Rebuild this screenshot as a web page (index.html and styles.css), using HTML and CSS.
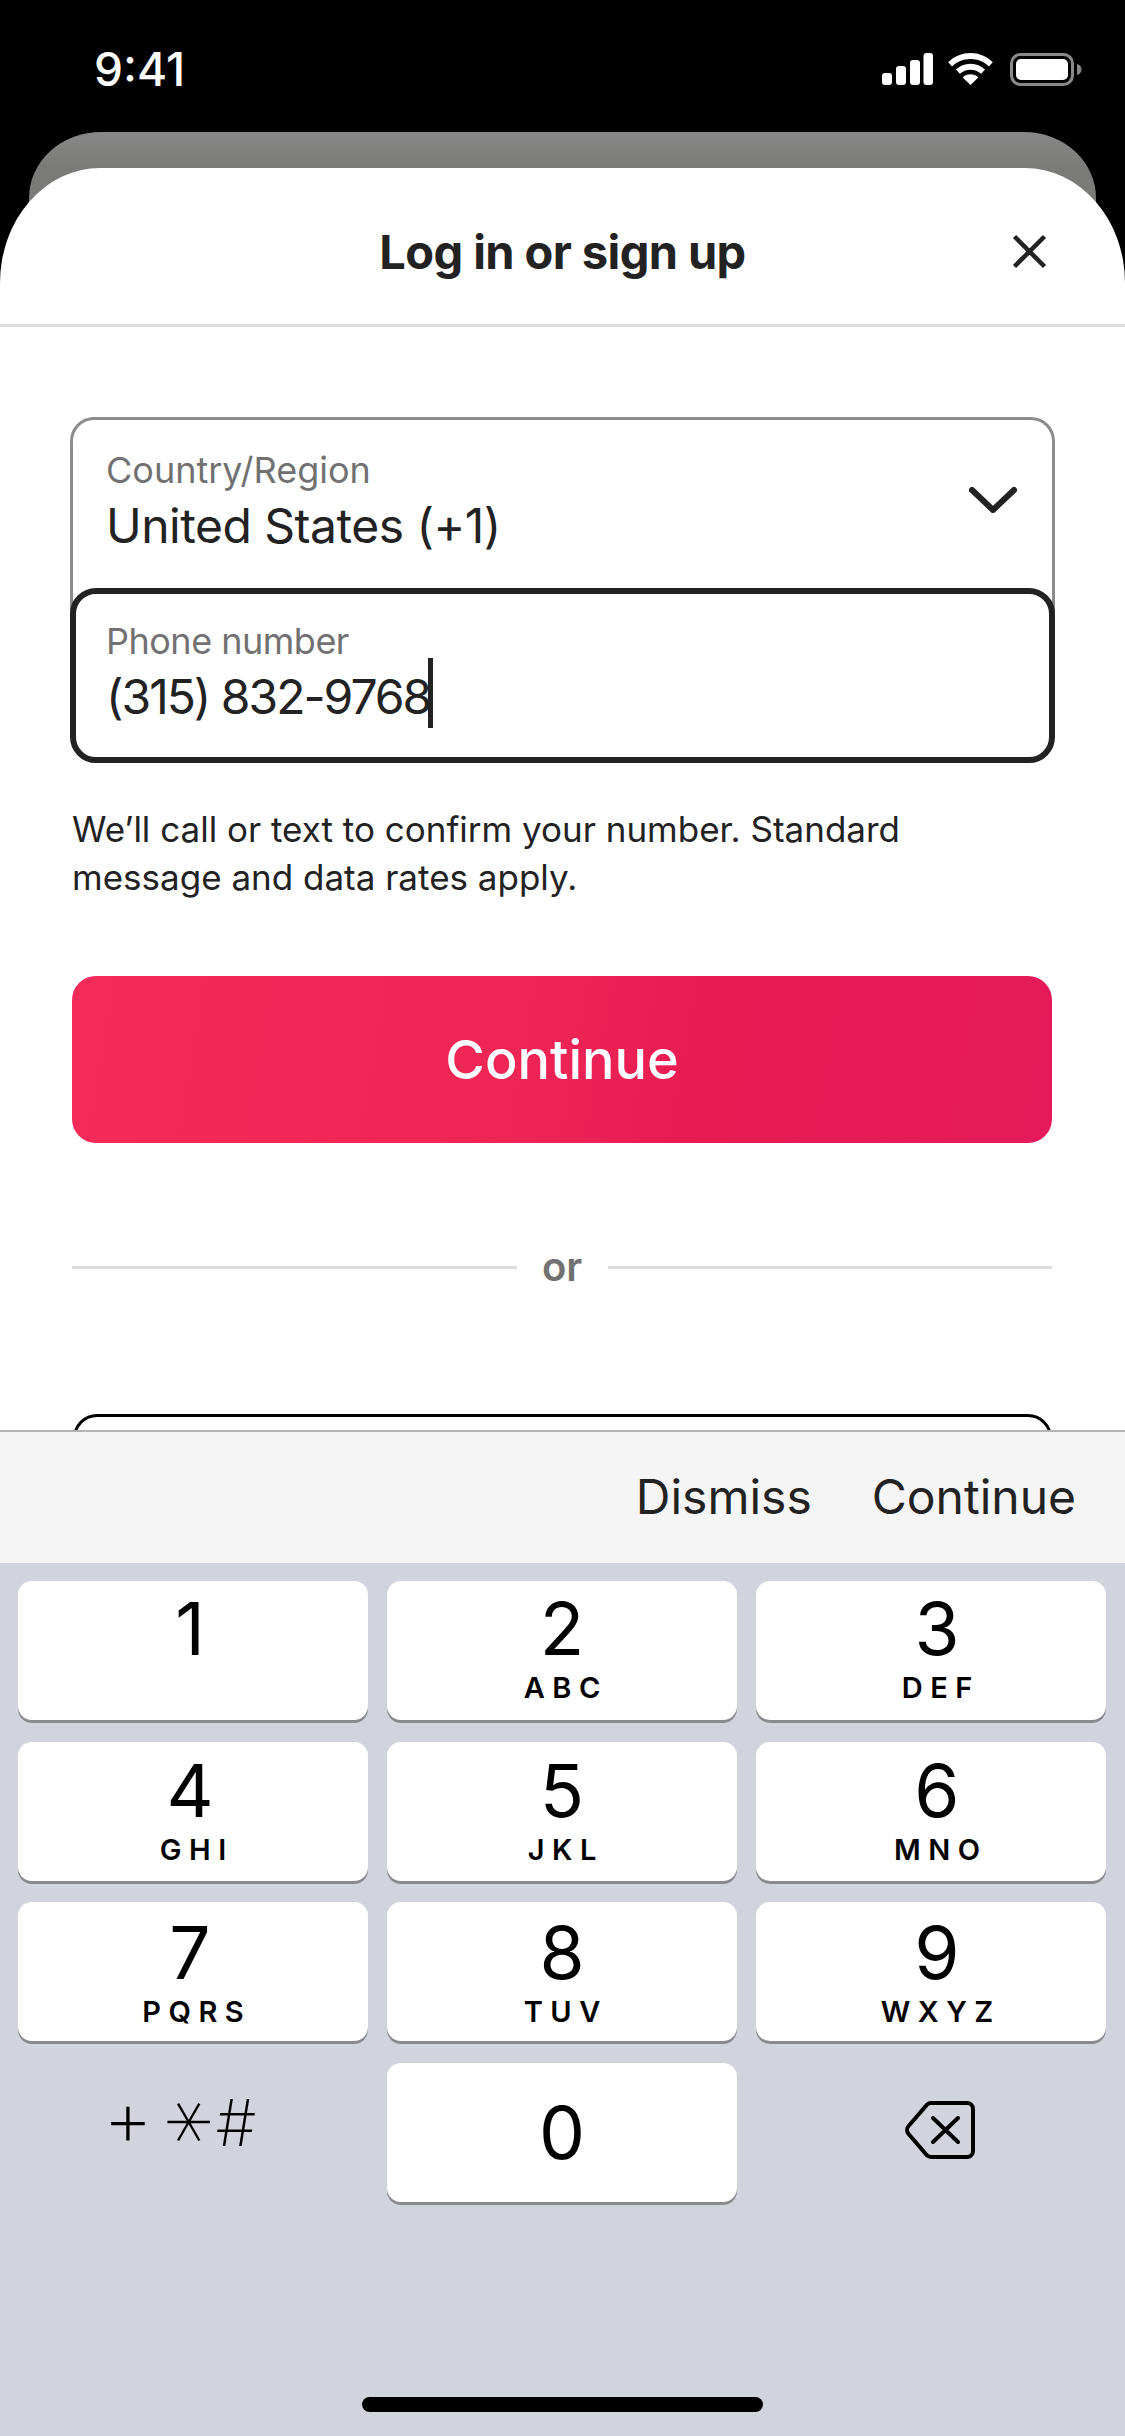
FILE: index.html
```html
<!DOCTYPE html>
<html lang="en">
<head>
<meta charset="utf-8">
<title>Log in or sign up</title>
<link rel="stylesheet" href="styles.css">
</head>
<body>
<div class="screen">
  <header class="status">
    <span class="time">9:41</span>
    <div class="status-icons">
      <svg class="sig" width="51" height="32" viewBox="0 0 51 32"><rect x="0" y="20" width="10" height="12" rx="3"/><rect x="14" y="13" width="10" height="19" rx="3"/><rect x="28" y="7" width="10" height="25" rx="3"/><rect x="41.500" y="0" width="9.500" height="32" rx="3"/></svg>
      <svg class="wifi" width="45" height="32" viewBox="0 0 46 33"><path d="M23 0C14 0 6 3.500 0 9.500l4 4.500C9 9 15.500 6.200 23 6.200S37 9 42 14l4-4.500C40 3.500 32 0 23 0z"/><path d="M23 11c-6 0-11 2.400-15 6l4 4.500c3-2.700 6.800-4.300 11-4.300s8 1.600 11 4.300l4-4.500c-4-3.600-9-6-15-6z"/><path d="M23 22c-3.200 0-6 1.200-8 3.200L23 33l8-7.800c-2-2-4.800-3.200-8-3.200z"/></svg>
      <svg class="batt" width="72" height="33" viewBox="0 0 72 33"><rect x="1.500" y="1.500" width="61" height="30" rx="9" fill="none" stroke="#8a8a8a" stroke-width="3"/><rect x="6" y="6" width="52" height="21" rx="5" fill="#fff"/><path d="M67 11c2.800.8 4.500 3 4.500 5.500S69.800 21.200 67 22z" fill="#8a8a8a"/></svg>
    </div>
  </header>
  <div class="stage">
    <div class="backcard"></div>
    <main class="sheet">
      <div class="sheet-head">
        <h1 class="title">Log in or sign up</h1>
        <svg class="close" width="35" height="35" viewBox="0 0 35 35"><path d="M2.500 2.500l30 30M32.500 2.500l-30 30" fill="none" stroke="#222" stroke-width="4.500"/></svg>
      </div>
      <div class="sheet-body">
        <div class="fields">
          <div class="field country">
            <div class="field-text">
              <span class="label">Country/Region</span>
              <span class="value">United States (+1)</span>
            </div>
            <svg class="chev" width="48" height="26" viewBox="0 0 48 26"><path d="M3 3l21 20L45 3" fill="none" stroke="#222" stroke-width="6" stroke-linecap="round" stroke-linejoin="round"/></svg>
          </div>
          <div class="field phone">
            <div class="field-text">
              <span class="label">Phone number</span>
              <span class="value">(315) 832-9768<i class="caret"></i></span>
            </div>
          </div>
        </div>
        <p class="note">We’ll call or text to confirm your number. Standard message and data rates apply.</p>
        <button class="cta">Continue</button>
        <div class="divider"><span class="rule"></span><span class="or">or</span><span class="rule"></span></div>
        <div class="ghost"></div>
      </div>
    </main>
  </div>
  <section class="kb-wrap">
    <div class="accessory"><span class="acc-btn">Dismiss</span><span class="acc-btn">Continue</span></div>
    <div class="keyboard">
      <div class="keys">
        <div class="key"><span class="d">1</span></div>
        <div class="key"><span class="d">2</span><span class="l">ABC</span></div>
        <div class="key"><span class="d">3</span><span class="l">DEF</span></div>
        <div class="key row2"><span class="d">4</span><span class="l">GHI</span></div>
        <div class="key row2"><span class="d">5</span><span class="l">JKL</span></div>
        <div class="key row2"><span class="d">6</span><span class="l">MNO</span></div>
        <div class="key row3"><span class="d">7</span><span class="l">PQRS</span></div>
        <div class="key row3"><span class="d">8</span><span class="l">TUV</span></div>
        <div class="key row3"><span class="d">9</span><span class="l">WXYZ</span></div>
        <div class="key flat sym-key"><div class="sym"><span class="s-plus">+</span><span class="s-star">*</span><span class="s-hash">#</span></div></div>
        <div class="key zero"><span class="d">0</span></div>
        <div class="key flat del-key"><svg class="del" width="70" height="58" viewBox="0 0 70 58"><path d="M26 2h36a6 6 0 0 1 6 6v42a6 6 0 0 1-6 6H26a6 6 0 0 1-4-1.600L3.600 33a6 6 0 0 1 0-8L22 3.600A6 6 0 0 1 26 2z" fill="none" stroke="#000" stroke-width="4"/><path d="M28 17l25 24M53 17L28 41" fill="none" stroke="#000" stroke-width="4" stroke-linecap="round"/></svg></div>
      </div>
      <div class="home"></div>
    </div>
  </section>
</div>
</body>
</html>
```

FILE: styles.css
```css
* { box-sizing: border-box; }
html, body { margin: 0; padding: 0; }
body { width: 1125px; height: 2436px; overflow: hidden; background: #000; font-family: "Inter", "Liberation Sans", sans-serif; }
.screen { width: 1125px; height: 2436px; display: flex; flex-direction: column; background: #000; }

.status { height: 132px; flex: none; display: flex; justify-content: space-between; padding: 50px 43px 0 94px; color: #fff; }
.time { font-size: 46px; line-height: 38px; font-weight: 500; }
.status-icons { display: flex; height: 34px; align-items: flex-start; padding-top: 3px; }
.sig { fill: #fff; margin-right: 15px; }
.wifi { fill: #fff; margin-right: 17px; }

.stage { position: relative; height: 1298px; flex: none; overflow: hidden; padding-top: 36px; }
.backcard { position: absolute; left: 29px; right: 29px; top: 0; height: 120px; border-radius: 72px 72px 0 0 / 66px 66px 0 0; background: linear-gradient(#888888 0, #7a7a78 36px); }
.sheet { position: relative; height: 100%; background: #fff; border-radius: 100px 100px 0 0 / 115px 115px 0 0; overflow: hidden; }
.sheet-head { height: 159px; padding-top: 10px; display: flex; align-items: center; justify-content: center; position: relative; border-bottom: 3px solid #dedede; }
.title { margin: 0; font-size: 47px; font-weight: 700; color: #222; line-height: 1; letter-spacing: -0.6px; }
.close { position: absolute; right: 78px; top: 66px; }

.sheet-body { padding: 90px 70px 0 70px; }
.fields { display: flex; flex-direction: column; }
.field { width: 985px; display: flex; align-items: flex-start; justify-content: space-between; background: #fff; }
.country { height: 195px; border: 3px solid #8c8c8c; border-bottom: none; border-radius: 24px 24px 0 0; padding: 29px 35px 0 33px; }
.phone { height: 175px; margin-top: -24px; position: relative; border: 6px solid #222; border-radius: 26px; padding: 26px 0 0 30px; }
.field-text { display: flex; flex-direction: column; }
.label { font-size: 36px; line-height: 42px; color: #717171; }
.phone .label { letter-spacing: -0.5px; }
.value { font-size: 48px; line-height: 58px; margin-top: 6px; color: #222; letter-spacing: -0.5px; }
.phone .value { letter-spacing: -2px; }
.chev { margin-top: 38px; }
.caret { position: absolute; top: 64px; width: 5px; height: 70px; margin-left: -2px; background: #222; }
.note { margin: 42px 0 0 2px; width: 900px; font-size: 35px; line-height: 48px; color: #222; }
.cta { display: block; width: 980px; height: 167px; margin: 75px 0 0 2px; border: none; border-radius: 24px; color: #fff; font-family: inherit; font-size: 54px; font-weight: 500; background: linear-gradient(100deg, #f52a58 0%, #ef2556 45%, #e71b52 65%, #e41a5a 100%); }
.divider { display: flex; align-items: center; margin: 116px 0 0 2px; width: 980px; height: 16px; }
.rule { flex: 1; height: 3px; background: #dcdcdc; }
.or { width: 91px; text-align: center; font-size: 40px; font-weight: 600; color: #717171; line-height: 1; }
.ghost { width: 979px; height: 100px; margin: 139px 0 0 3px; border: 3px solid #000; border-radius: 24px; }

.kb-wrap { flex: 1; display: flex; flex-direction: column; }
.accessory { height: 133px; flex: none; background: #f5f5f5; border-top: 2px solid #b4b4b4; display: flex; justify-content: flex-end; align-items: center; gap: 60px; padding-right: 49px; padding-bottom: 2px; }
.acc-btn { font-size: 48px; color: #222; }
.keyboard { flex: 1; background: #d1d4dc; position: relative; padding: 18px 18px 0; }
.keys { display: grid; grid-template-columns: repeat(3, 350px); grid-auto-rows: 139px; column-gap: 19px; row-gap: 21.7px; }
.key { background: #fff; border-radius: 14px; box-shadow: 0 3px 0 #898a8e; display: flex; flex-direction: column; align-items: center; color: #000; padding-top: 9px; }
.key.row2 { padding-top: 10px; }
.key.row3 { padding-top: 12px; }
.key:nth-child(3n) { padding-left: 12px; }
.key:nth-child(3n+1) .d { margin-right: 6px; }
.key.flat { background: none; box-shadow: none; justify-content: center; padding-top: 0; }
.key.zero { justify-content: center; padding-top: 0; }
.d { font-size: 73px; line-height: 78px; font-weight: 400; }
.l { font-size: 29px; line-height: 34px; font-weight: 600; letter-spacing: 7.500px; margin: 3px -7.500px 0 0; }
.key.sym-key { padding-right: 22px; padding-bottom: 20px; }
.key.del-key { padding: 0 0 6px 17px; }
.sym { display: flex; gap: 18px; align-items: center; height: 40px; font-weight: 200; line-height: 40px; }
.s-plus, .s-star, .s-hash { display: flex; justify-content: center; width: 38px; }
.s-plus { font-size: 78px; transform: translateY(-5px); }
.s-star { font-size: 104px; font-weight: 100; transform: translate(-12px, -1px) rotate(90deg); }
.s-hash { font-size: 64px; margin-left: -4px; }
.home { position: absolute; left: 362px; bottom: 24px; width: 401px; height: 15px; border-radius: 8px; background: #000; }
```
